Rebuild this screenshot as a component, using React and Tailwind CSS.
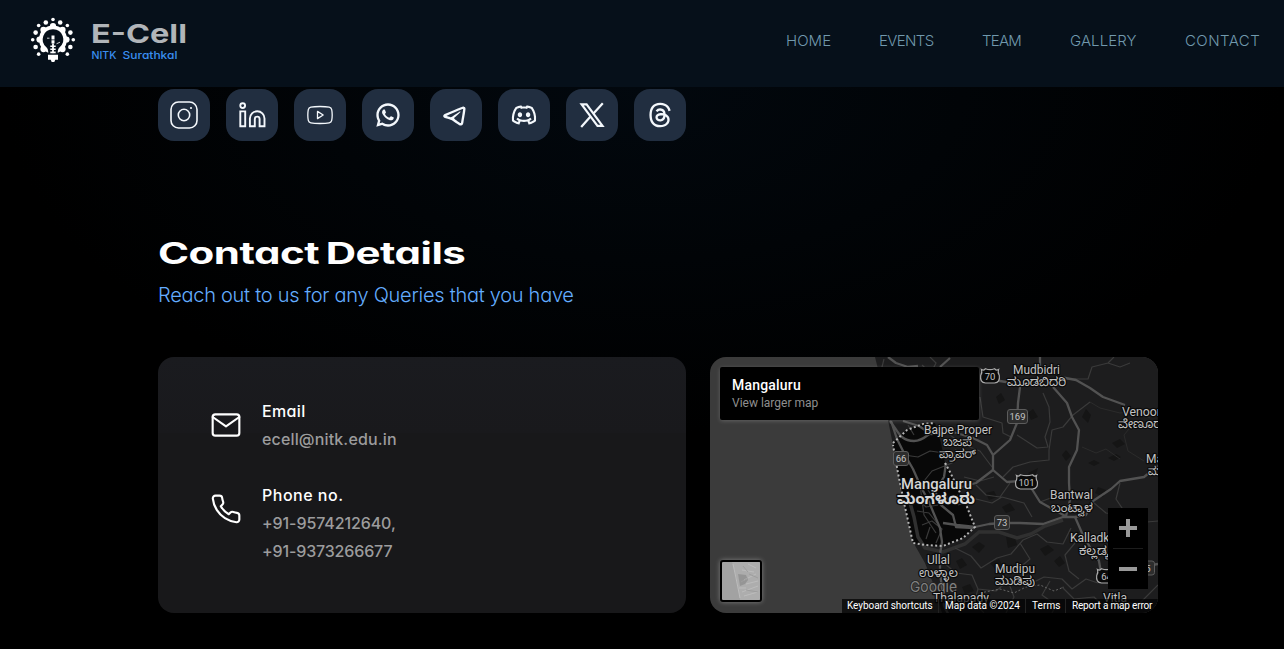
import React from 'react';
import { RiWhatsappLine, RiTelegram2Line, RiDiscordLine, RiThreadsLine } from 'react-icons/ri';
import { FiMail, FiPhone } from 'react-icons/fi';

const navItems = [
  { label: 'HOME', box: 'w-[45px]', text: 'tracking-[0.05px]' },
  { label: 'EVENTS', box: 'w-[55px]', text: 'tracking-[-0.65px]' },
  { label: 'TEAM', box: 'w-[40px]', text: 'tracking-[-0.75px]' },
  { label: 'GALLERY', box: 'w-[67px]', text: 'tracking-[0.1px]' },
  { label: 'CONTACT', box: 'w-[75px]', text: 'tracking-[0.45px]' },
];

function InstagramIcon() {
  return (
    <svg width="28" height="28" viewBox="0 0 28 28" fill="none" stroke="currentColor" strokeWidth="1.6">
      <rect x="1" y="1" width="26" height="26" rx="7.5" />
      <circle cx="14" cy="14" r="5.7" />
      <circle cx="21" cy="7" r="1.1" fill="currentColor" stroke="none" />
    </svg>
  );
}

function LinkedinIcon() {
  return (
    <svg width="28" height="28" viewBox="0 0 28 28" fill="none" stroke="currentColor" strokeWidth="1.9">
      <circle cx="4.7" cy="4.6" r="2.4" />
      <path d="M2.300 10.400h4.900v14.900h-4.900z" />
      <path d="M11.900 25.300V17.600a7.300 7.300 0 0 1 14.600 0v7.700h-4.900v-7.300a2.400 2.400 0 0 0-4.800 0v7.300z" />
    </svg>
  );
}

function YoutubeIcon() {
  return (
    <svg width="28" height="28" viewBox="0 0 28 28" fill="none" stroke="currentColor" strokeWidth="1.300" strokeLinejoin="round">
      <path d="M14 5.500c4.600 0 7.300.3 9.200.7 1.400.3 2.200 1.100 2.500 2.500.3 1.500.5 3.200.5 5.300s-.2 3.800-.5 5.300c-.3 1.400-1.100 2.200-2.500 2.500-1.900.4-4.600.7-9.200.7s-7.300-.3-9.200-.7c-1.400-.3-2.200-1.100-2.500-2.500-.3-1.500-.5-3.200-.5-5.300s.2-3.800.5-5.300c.3-1.400 1.100-2.200 2.500-2.500 1.900-.4 4.600-.7 9.200-.7z" />
      <path d="M11.500 10.400 17.200 14l-5.700 3.600z" />
    </svg>
  );
}

function XIcon() {
  return (
    <svg width="28" height="28" viewBox="0 0 28 28" fill="none" stroke="currentColor" strokeWidth="2.200">
      <path d="M3.600 3.300h5l15.900 21.500h-5z" />
      <path d="M24.800 2.200 15.700 12.300M12.300 15.800 3.200 26" />
    </svg>
  );
}

const socials = [
  InstagramIcon,
  LinkedinIcon,
  YoutubeIcon,
  () => <RiWhatsappLine size={28} />,
  () => <RiTelegram2Line size={28} />,
  () => <RiDiscordLine size={28} />,
  XIcon,
  () => <RiThreadsLine size={28} />,
];

const gearAngles = Array.from({ length: 16 }, (_, i) => (i * Math.PI) / 8);

function Logo() {
  return (
    <svg width="170" height="60" viewBox="24 10 170 60">
      <g fill="#fff">
        {gearAngles.map((a, i) => {
          if (i >= 3 && i <= 5) return null;
          const even = i % 2 === 0;
          const r = even ? 20.300 : 18.800;
          return <circle key={i} cx={53 + r * Math.cos(a)} cy={39.800 + r * Math.sin(a)} r={even ? 1.800 : 2.300} />;
        })}
        {gearAngles.filter((_, i) => i % 2 === 0 && i !== 4).map((a, i) => (
          <circle key={i} cx={53 + 13.500 * Math.cos(a)} cy={39.500 + 13.500 * Math.sin(a)} r="3.100" />
        ))}
        <circle cx="53" cy="39.500" r="14" />
      </g>
      <path d="M53 29.200a10.200 10.200 0 0 1 6.400 18.200c-1.200 1.100-1.700 2.800-1.700 5.800h-9.400c0-3-.5-4.700-1.700-5.800A10.200 10.200 0 0 1 53 29.200z" fill="#06101a" />
      <g fill="none" stroke="#fff">
        <path d="M53 35.500v8" strokeWidth="3" strokeDasharray="4 .8" />
        <path d="M53 43.500v9" strokeWidth="1.800" />
        <path d="M50.300 46.200h5.400M50.300 49.200h5.400M50.300 52.200h5.400" strokeWidth="1.500" />
        <path d="M47 38.200h2.500M56.500 43.800l3.500-1.600" strokeWidth=".8" />
      </g>
      <path d="M48 54.700h10v5.100h-2.700l-1 2.200h-2.600l-1-2.200H48z" fill="#fff" />
      <text x="91" y="43" fontFamily="Inter, sans-serif" fontWeight="700" fontSize="26" textLength="96" lengthAdjust="spacingAndGlyphs" fill="#b1b5b9">E-Cell</text>
      <text x="91.500" y="59" fontFamily="Inter, sans-serif" fontWeight="500" fontSize="11" textLength="25" lengthAdjust="spacingAndGlyphs" fill="#3a8ef0">NITK</text>
      <text x="122.500" y="59" fontFamily="Inter, sans-serif" fontWeight="500" fontSize="11" textLength="55" lengthAdjust="spacingAndGlyphs" fill="#3a8ef0">Surathkal</text>
    </svg>
  );
}

const majorRoads = [
  'M330 0v15M310 30l-2 16-1 20-7 17-17 15v15l14 12 12-1',
  'M283 113l-17 13-22 6',
  'M283 98l-6-10-14-7-20-6-22 2-12-8-16-5',
  'M278 22l12 2 12 2',
  'M343 30l14 16 5 14 7 13-2 20-8 17v16l1 17-4 16',
  'M350 20l16 3 14 8 13 9 22 8',
  'M265 170l14-3 13-1h18l23 1 20-7h12l7 16 9 16 8 12 2 12',
  'M320 129l10 16 27 15',
  'M448 109l-14 11-24 4-9 8-18 12-7 14-11 2',
  'M181 64l6 18 8 16 8 14 8 18 8 15 5 12 6 14 2 14-2 12v18l4 34 8 15',
  'M236 106l-2 14-9 14 6 14 12 10 3 12 18 1',
  'M233 166l14 2 18 2',
  'M178 0l8 6 12 4 10-1M230 10l10-9',
  'M180 64c8 10 10 20 24 20 12 0 14-10 26-12',
  'M448 207l-12 2-14-2',
];
const minorRoads = [
  'M333 36l6 14 1 15-5 15 3 10-11 1-20-13',
  'M270 40l3 20 19 6 1 10 8 4',
  'M380 45l-17 13-10 12-11 3-3 20v10l-19 2-17 5-10 10',
  'M354 22h24l4-12 16-4 6-6M398 6l12 4 10-4',
  'M194 98l14 2 12-6 14 2M204 78l-6-10M240 78l14 10 16 6 12 16M246 92l-4 14-20 8-8 10',
  'M254 120l16 4 14-4M248 148l18-6 16 4 10-6 22 6 8 14M266 128l10 10 14 2 10-14',
  'M330 145l16-6 14 2M384 146l12 10 16 2 14 8 22-2M410 126l-4 16 8 12 18 4',
  'M245 191l16 8 10 12 16-10 14-4 12-14 14-6 10 8 16 2 8-16',
  'M310 186l10 16-12 10 10 16 16-8 18 2 10 10 14-10 12 4',
  'M234 206l12 10 16 2 6 14 18 2 12-10 14 4',
  'M268 232l-4 14 10 10M298 224l6 16-8 16M340 224l-8 14 14 10-4 8',
  'M365 186l-10 12 4 16 10 8M352 230l12 12 20-2 10 10 18-6 16 4 20-20',
  'M236 250l14-6 16 4M174 2l-2 8 6 8M212 8c8 6 4 14 14 18M220 0l6 6-4 8',
  'M204 126l12 4 8 12M206 140l10 10 12-2M207 154l12 2 8 10M212 168l10-4 10 8-6 14M216 182l4-12M210 128l4 30 12 18M234 130l4 14 10-6',
];
const faintRoads = [
  'M380 45l10 6 20 5 16-2 14 7',
  'M372 90l14 6 10-4 14 10M424 66l-10 12 4 16 16 10',
];
const patches = [
  'M378 106l6-3 6 3-6 3z', 'M372 60l4-8 5 6-3 8z', 'M318 116l10-5-3 9z', 'M398 101l8-4 5 3-7 4z',
  'M262 190l7-5 6 4-6 7zM280 206l9-4 3 6-7 4z', 'M246 204l6-3 5 7-7 4z', 'M296 180l9 1 2 7-9 3z', 'M388 130l8 3-3 7-8-4z',
  'M402 86l8-4 5 5-8 4z', 'M318 56l5-4 5 8-7 3z', 'M330 192l8-4 6 5-9 6z', 'M292 150l8-4 5 7-9 3z', 'M258 52l8 4-3 8-9-5z',
  'M312 212l7-3 4 6-8 4zM344 204l6-5 5 7-6 4z', 'M276 136l8-2 3 6-8 3z', 'M252 230l8-3 4 7-9 3z', 'M286 40l5-4 4 7-6 4z', 'M352 98l4-5 5 6-5 5z',
];

const mapLabels = [
  { t: 'Mudbidri', x: 303, y: 17, w: 47, s: 12 },
  { t: 'ಮೂಡಬಿದರಿ', x: 297, y: 29, w: 59, s: 12 },
  { t: 'Venoor', x: 412, y: 59, w: 39, s: 12 },
  { t: 'ವೇಣೂರು', x: 408, y: 71, w: 48, s: 12 },
  { t: 'Bajpe Proper', x: 214, y: 77, w: 68, s: 12 },
  { t: 'ಬಜಪೆ', x: 233, y: 88.500, w: 29, s: 12 },
  { t: 'ಪ್ರಾಪರ್', x: 229, y: 101, w: 37, s: 12 },
  { t: 'Ma', x: 436, y: 106, w: 17, s: 12 },
  { t: 'ಮಾ', x: 438, y: 118, w: 17, s: 12 },
  { t: 'Mangaluru', x: 191, y: 132, w: 71, s: 15, b: true },
  { t: 'ಮಂಗಳೂರು', x: 187, y: 147, w: 78, s: 15, b: true, k: true },
  { t: 'Bantwal', x: 340, y: 142, w: 43, s: 12 },
  { t: 'ಬಂಟ್ವಾಳ', x: 341, y: 154.500, w: 42, s: 12 },
  { t: 'Kalladka', x: 360, y: 185, w: 46, s: 12 },
  { t: 'ಕಲ್ಲಡ್ಕ', x: 369, y: 197.500, w: 30, s: 12 },
  { t: 'Ullal', x: 217, y: 207, w: 23, s: 12 },
  { t: 'ಉಳ್ಳಾಲ', x: 209, y: 219.500, w: 39, s: 12 },
  { t: 'Mudipu', x: 285, y: 216, w: 40, s: 12 },
  { t: 'ಮುಡಿಪು', x: 285, y: 228, w: 40, s: 12 },
  { t: 'Thalapady', x: 223, y: 244.500, w: 56, s: 12 },
  { t: 'Vitla', x: 393, y: 245, w: 24, s: 12 },
];

const shields = [
  { t: '70', x: 280, y: 19.500, w: 17, us: true },
  { t: '169', x: 307.500, y: 59.500, w: 20 },
  { t: '66', x: 191, y: 101.500, w: 15 },
  { t: '101', x: 316.500, y: 125.500, w: 20, us: true },
  { t: '73', x: 292, y: 165.500, w: 15 },
  { t: '64', x: 396.500, y: 219.500, w: 18, us: true },
  { t: '5', x: 438, y: 211, w: 13 },
];

function MapDrawing() {
  return (
    <svg className="block" width="448" height="256" viewBox="0 0 448 256">
      <rect width="448" height="256" fill="#3b3b3b" />
      <path d="M165 0l5 20 4 22 4 21 5 25 6 30 6 32 8 35 12 21 8 20 9 30h216V0z" fill="#1d1d1e" />
      {patches.map((d) => <path key={d} d={d} fill="#151515" />)}
      <path d="M183 86l14-13 16-6 12-1 6 20 4 20 5 9 17 35 8 20-12 11-20 8-18-1-12-2-8-36-7-34z" fill="#080808" />
      <path d="M199 142l5 18 4 20 7 11 18 4 22-8 14-12h20l18 6 14-4 14-8 18-6" fill="none" stroke="#303030" strokeWidth="3.500" />
      {faintRoads.map((d) => <path key={d} d={d} fill="none" stroke="#2b2b2b" strokeWidth="1" strokeLinejoin="round" />)}
      {minorRoads.map((d) => <path key={d} d={d} fill="none" stroke="#3a3a3a" strokeWidth="1.200" strokeLinejoin="round" />)}
      {majorRoads.map((d) => <path key={d} d={d} fill="none" stroke="#525252" strokeWidth="2.300" strokeLinejoin="round" />)}
      <path d="M183 86l14-13 16-6 12-1M235 106l5 9 17 35 8 20-12 11-20 8-18-1-12-2-8-36-7-34-5-28" fill="none" stroke="#b5b5b5" strokeWidth="2" strokeDasharray="2 2.400" />
      <path d="M270 236l20-4 14 4 12-6 14-2 14 6 10-4" fill="none" stroke="#666" strokeWidth="1" strokeDasharray="2 2" />
      {shields.map((s) => (
        <g key={s.t}>
          {s.us ? (
            <path
              d={`M${s.x - s.w / 2} ${s.y - 7}q2.500 1.500 4 -.8q${s.w / 2 - 4} 2 ${s.w - 8} 0q1.500 2.300 4 .8q-1 3 .8 6q1 7 -4.800 7.500h${-(s.w - 8)}q-5.800 -.5 -4.800 -7.500q1.800 -3 .8 -6z`}
              fill="#0a0a0a" stroke="#aaa" strokeWidth="1.200"
            />
          ) : (
            <rect x={s.x - s.w / 2} y={s.y - 7} width={s.w} height="14" rx="2.500" fill="#2d2d2d" stroke="#5c5c5c" strokeWidth="1" />
          )}
          <text x={s.x} y={s.y + 3.500} textAnchor="middle" fontFamily="Roboto, sans-serif" fontSize="9.500" fill="#c4c4c4">{s.t}</text>
        </g>
      ))}
      <text x="200" y="234.500" fontFamily="Inter, sans-serif" fontSize="15" textLength="47" lengthAdjust="spacingAndGlyphs" fill="#808080" stroke="#222" strokeWidth="1.500" paintOrder="stroke">Google</text>
      {mapLabels.map((l) => (
        <text key={l.t} x={l.x} y={l.y} textLength={l.w} lengthAdjust="spacingAndGlyphs" fontFamily="Roboto, 'Noto Sans Kannada', 'Noto Sans', sans-serif" fontWeight={l.k ? 700 : l.b ? 500 : 400} fontSize={l.s} fill={l.b ? '#d6d6d6' : '#c2c2c2'} stroke="#0b0b0b" strokeWidth="2.500" strokeLinejoin="round" paintOrder="stroke">{l.t}</text>
      ))}
    </svg>
  );
}

function MapCard() {
  return (
    <div className="relative h-[256px] w-[448px] overflow-hidden rounded-2xl font-['Roboto',sans-serif]">
      <MapDrawing />
      <div className="absolute left-[10px] top-[10px] h-[53px] w-[259px] rounded-[2px] bg-black px-3 pt-[9px] shadow-[0_1px_4px_rgba(255,255,255,0.2)]">
        <div className="text-[14px] font-medium leading-[18px] tracking-[0.2px] text-white">Mangaluru</div>
        <div className="text-[12px] leading-[18px] text-[#8f8f8f]">View larger map</div>
      </div>
      <div className="absolute bottom-[11px] left-[10px] size-[42px] overflow-hidden rounded-[3px] border-2 border-black bg-[#a2a2a2] shadow-[0_0_5px_rgba(255,255,255,0.35)]">
        <svg width="38" height="38" viewBox="0 0 38 38">
          <path d="M10 0l5 18 3 20h20V0z" fill="#adadad" />
          <path d="M16 12l8 1 2 5-3 4-5 2z" fill="#959595" />
          <path d="M11 2l3 14 4 20M17 26h7M20 8l12 2M22 18l12-6M20 30l16-6M26 2l8 4M24 22l12-3M22 34l14-4" fill="none" stroke="#bcbcbc" strokeWidth="1" />
          <path d="M19 20l7-4M27 12l9 4M24 28l12 2M21 4l5 6" fill="none" stroke="#9e9e9e" strokeWidth="1" />
        </svg>
      </div>
      <div className="absolute right-[10px] top-[151px] flex h-[81px] w-[40px] flex-col items-center bg-black">
        <div className="relative flex h-10 w-full items-center justify-center">
          <div className="h-[4px] w-[18px] bg-[#999]" />
          <div className="absolute h-[18px] w-[4px] bg-[#999]" />
        </div>
        <div className="h-px w-[30px] bg-[#1d1d1d]" />
        <div className="flex h-10 w-full items-center justify-center">
          <div className="h-[4px] w-[18px] bg-[#999]" />
        </div>
      </div>
      <div className="absolute bottom-0 right-0 flex h-[14px] w-[316px] items-center whitespace-nowrap bg-black/70 text-[10px] leading-[14px] text-white">
        <span className="w-[97px] border-r border-[#222] pl-[5px] tracking-[-0.06px]">Keyboard shortcuts</span>
        <span className="w-[87px] border-r border-[#222] pl-[6px]">Map data ©2024</span>
        <span className="w-[40px] border-r border-[#222] pl-[6px] tracking-[0.1px]">Terms</span>
        <span className="pl-[6px] tracking-[-0.18px]">Report a map error</span>
      </div>
    </div>
  );
}

export default function App() {
  return (
    <div className="h-[649px] w-full overflow-hidden bg-black font-['Inter',sans-serif] text-white [font-feature-settings:'cv11']">
      <header className="flex h-[87px] items-start justify-between bg-[#06101a] pl-6 pr-[24px]">
        <div className="pt-[10px]"><Logo /></div>
        <nav className="flex gap-12 pt-[31px] text-[15px] font-light leading-5 text-[#7199ad]">
          {navItems.map((n) => (
            <a key={n.label} className={`${n.box} ${n.text} whitespace-nowrap`}>{n.label}</a>
          ))}
        </nav>
      </header>
      <main className="h-[562px] bg-[radial-gradient(ellipse_640px_346px_at_50%_0,#02080e_0%,#010407_50%,#000_100%)] pl-[158px] pt-[2px]">
        <div className="flex gap-4">
          {socials.map((Icon, i) => (
            <a key={i} className="flex size-[52px] items-center justify-center rounded-2xl bg-[#212e40] text-[#f4f8fc]"><Icon /></a>
          ))}
        </div>
        <section className="pt-[92px]">
          <h2 className="w-max origin-left scale-x-[1.4] text-[30px] font-bold leading-10 tracking-[-0.35px] [word-spacing:-2px]">Contact Details</h2>
          <p className="mt-[8px] text-[20px] font-light leading-7 tracking-[-0.27px] text-[#64adff]">Reach out to us for any Queries that you have</p>
          <div className="mt-[48px] flex gap-6">
            <div className="flex h-[256px] w-[528px] flex-col gap-7 rounded-2xl bg-[linear-gradient(#1a1b1f_0,#19191c_76px,#18181a_76px)] pl-[52px] pt-10 leading-7">
              <div className="flex items-center gap-5">
                <FiMail size={32} strokeWidth={1.6} />
                <div>
                  <div className="font-medium tracking-[0.35px]">Email</div>
                  <div className="font-medium tracking-[0.15px] text-[#9c9c9d]">ecell@nitk.edu.in</div>
                </div>
              </div>
              <div className="flex gap-5">
                <FiPhone size={32} strokeWidth={1.6} className="mt-3" />
                <div>
                  <div className="font-medium tracking-[0.5px]">Phone no.</div>
                  <div className="font-medium tracking-[-0.1px] text-[#9c9c9d]">+91-9574212640,</div>
                  <div className="font-medium tracking-[-0.15px] text-[#9c9c9d]">+91-9373266677</div>
                </div>
              </div>
            </div>
            <MapCard />
          </div>
        </section>
      </main>
    </div>
  );
}
